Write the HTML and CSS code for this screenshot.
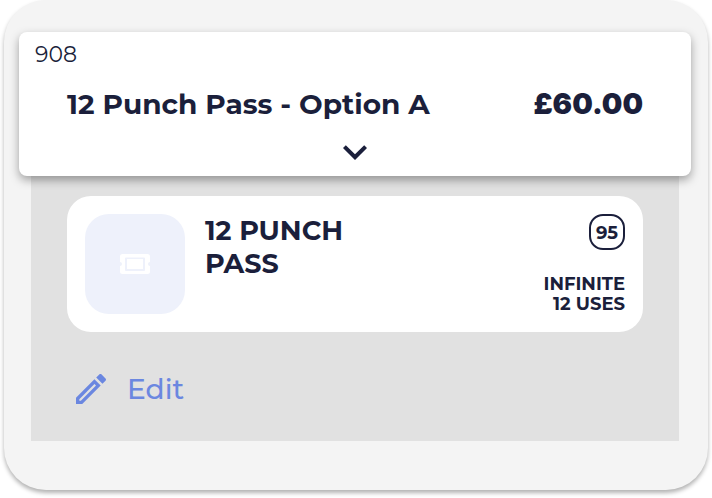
FILE: index.html
```html
<!DOCTYPE html>
<html lang="en">
<head>
    <meta charset="UTF-8">
    <meta name="viewport" content="width=device-width, initial-scale=1.0">
    <title>12 Punch Pass - Option A</title>
    <link rel="stylesheet" href="styles.css">
</head>
<body>

<main class="pass-card">
    <button class="option-header" type="button" aria-expanded="true">
        <span class="option-id">908</span>
        <span class="option-row">
            <span class="option-name">12 Punch Pass - Option A</span>
            <span class="option-price">£60.00</span>
        </span>
        <svg class="chevron" viewBox="0 0 24 24" aria-hidden="true">
            <path d="M16.59 8.59 12 13.17 7.41 8.59 6 10l6 6 6-6z"/>
        </svg>
    </button>

    <section class="option-body">
        <article class="item">
            <div class="item-image">
                <svg viewBox="0 0 30 20" aria-hidden="true">
                    <path fill-rule="evenodd" d="M2.5 0h25A2.5 2.5 0 0 1 30 2.5V8a2 2 0 0 0 0 4v5.5a2.5 2.5 0 0 1-2.5 2.5h-25A2.5 2.5 0 0 1 0 17.5V12a2 2 0 0 0 0-4V2.5A2.5 2.5 0 0 1 2.5 0zM6 3.500a1 1 0 0 0-1 1v11.500a1 1 0 0 0 1 1h18a1 1 0 0 0 1-1v-11.500a1 1 0 0 0-1-1z"/>
                    <rect x="7" y="5" width="16" height="10"/>
                </svg>
            </div>
            <h2 class="item-name">12 PUNCH PASS</h2>
            <div class="item-info">
                <span class="badge">95</span>
                <p class="item-uses">INFINITE<br>12 USES</p>
            </div>
        </article>

        <button class="edit-button" type="button">
            <svg viewBox="0 0 24 24" aria-hidden="true">
                <path d="M14.06 9 15 9.94 5.92 19H5v-.92L14.06 9M17.66 3c-.25 0-.51.1-.7.29l-1.83 1.83 3.75 3.75 1.83-1.83c.39-.39.39-1.04 0-1.41l-2.34-2.34c-.2-.2-.45-.29-.71-.29M14.06 6.19 3 17.25V21h3.75L17.81 9.94z"/>
            </svg>
            Edit
        </button>
    </section>
</main>

</body>
</html>
```

FILE: styles.css
```css
* {
    box-sizing: border-box;
}
body {
    margin: 0;
    padding: 0 4px 8px;
    background-color: #fff;
    color: #1b1f3b;
    font-family: Montserrat, Inter, sans-serif;
}
button {
    border: none;
    font-family: inherit;
    color: inherit;
    cursor: pointer;
}
svg {
    fill: currentColor;
}
.pass-card {
    padding: 32px 17px 49px 15px;
    border-radius: 42px;
    background-color: #f4f4f4;
    box-shadow: 0 3px 4px rgba(0, 0, 0, 0.3);
}
.option-header {
    position: relative;
    display: flex;
    flex-direction: column;
    width: 100%;
    padding: 8px 16px 0;
    border-radius: 8px;
    background-color: #fff;
    box-shadow: 0 4px 10px rgba(0, 0, 0, 0.35);
    text-align: left;
}
.option-id {
    font-size: 22px;
    line-height: 30px;
}
.option-row {
    display: flex;
    align-items: center;
    justify-content: space-between;
    padding: 14px 32px 4px;
    font-size: 28px;
    line-height: 40px;
}
.option-name {
    font-weight: 700;
}
.option-price {
    font-family: Inter, sans-serif;
    font-size: 29px;
    font-weight: 900;
}
.chevron {
    width: 48px;
    height: 48px;
    align-self: center;
}
.option-body {
    margin: 0 12px;
    padding: 20px 36px 32px;
    background-color: #e1e1e1;
}
.item {
    display: flex;
    gap: 20px;
    padding: 18px;
    border-radius: 24px;
    background-color: #fff;
}
.item-image {
    display: flex;
    flex-shrink: 0;
    align-items: center;
    justify-content: center;
    width: 100px;
    height: 100px;
    border-radius: 24px;
    background-color: #eef1fb;
    color: #fff;
}
.item-image svg {
    width: 30px;
    height: 20px;
}
.item-name {
    width: 160px;
    margin: 0;
    font-size: 27px;
    font-weight: 700;
    line-height: 33px;
}
.item-info {
    display: flex;
    flex-direction: column;
    align-items: flex-end;
    justify-content: space-between;
    margin-left: auto;
}
.badge {
    width: 36px;
    height: 36px;
    border: 2px solid #1b1f3b;
    border-radius: 14px;
    font-size: 18px;
    font-weight: 700;
    line-height: 34px;
    text-align: center;
}
.item-uses {
    margin: 0;
    font-size: 18px;
    font-weight: 700;
    line-height: 20px;
    text-align: right;
}
.edit-button {
    display: flex;
    align-items: center;
    gap: 16px;
    margin-top: 37px;
    padding: 0 4px;
    background: none;
    color: #6b87e0;
    font-size: 28px;
    font-weight: 500;
    line-height: 40px;
}
.edit-button svg {
    width: 40px;
    height: 40px;
}
```
